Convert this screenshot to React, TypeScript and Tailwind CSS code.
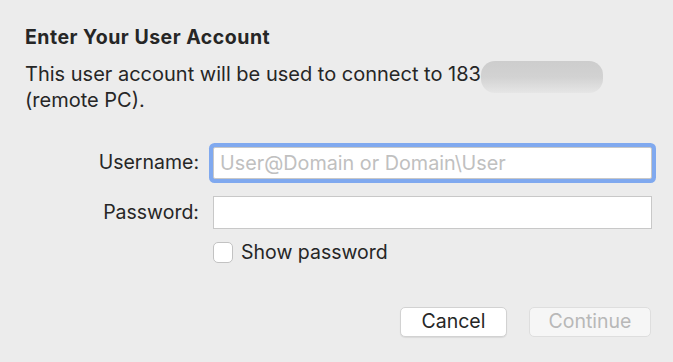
import React from 'react';

const font = { fontFamily: 'Inter, "Noto Sans", sans-serif' };

const App: React.FC = () => {
    return (
        <div className="w-[673px] h-[362px] bg-[#ececec] text-[#262626] pt-[25px] pl-[25px] pr-[21px]" style={font}>
            {/* Title */}
            <h1 className="text-[19.5px] leading-[24px] font-bold tracking-[0.5px]">Enter Your User Account</h1>

            {/* Description */}
            <p className="mt-[12px] text-[20px] leading-[26px]">
                This user account will be used to connect to 183
                <span className="inline-block align-top w-[122px] h-[32px] mb-[-6px] rounded-[14px] bg-gradient-to-b from-[#cdcdcd] via-[#d2d2d2] to-[#e6e6e6]" />
                <br />
                (remote PC).
            </p>

            {/* Form */}
            <div className="mt-[34px] flex flex-col">
                <div className="flex items-center">
                    <label className="w-[174px] text-right text-[19.5px]">Username:</label>
                    <input
                        className="ml-[14px] w-[439px] h-[32px] bg-white border border-[#c8c8c8] rounded-[2px] ring-4 ring-[#80a9ef] px-[6px] text-[19.8px] outline-none placeholder:text-[#c0c0c0]"
                        placeholder="User@Domain or Domain\User"
                    />
                </div>
                <div className="mt-[17px] flex items-center">
                    <label className="w-[174px] text-right text-[19.5px]">Password:</label>
                    <input
                        type="password"
                        className="ml-[14px] w-[439px] h-[33px] bg-white border border-[#c8c8c8] px-[6px] text-[19.5px] outline-none"
                    />
                </div>
                <div className="mt-[12px] flex items-center pl-[188px]">
                    <span className="w-[20px] h-[21px] bg-white border border-[#c2c2c2] rounded-[5px]" />
                    <span className="ml-[8px] text-[19.5px] leading-[22px]">Show password</span>
                </div>
            </div>

            {/* Buttons */}
            <div className="mt-[44px] flex justify-end gap-[22px] pr-[1px]">
                <button className="w-[107px] h-[30px] bg-white border border-[#d2d2d2] rounded-[5px] shadow-[0_1px_1px_rgba(0,0,0,0.08)] text-[19.5px] leading-none">
                    Cancel
                </button>
                <button className="w-[122px] h-[30px] bg-[#f6f6f6] border border-[#dedede] rounded-[5px] text-[19.5px] leading-none text-[#b8b8b8]">
                    Continue
                </button>
            </div>
        </div>
    );
};

export default App;
